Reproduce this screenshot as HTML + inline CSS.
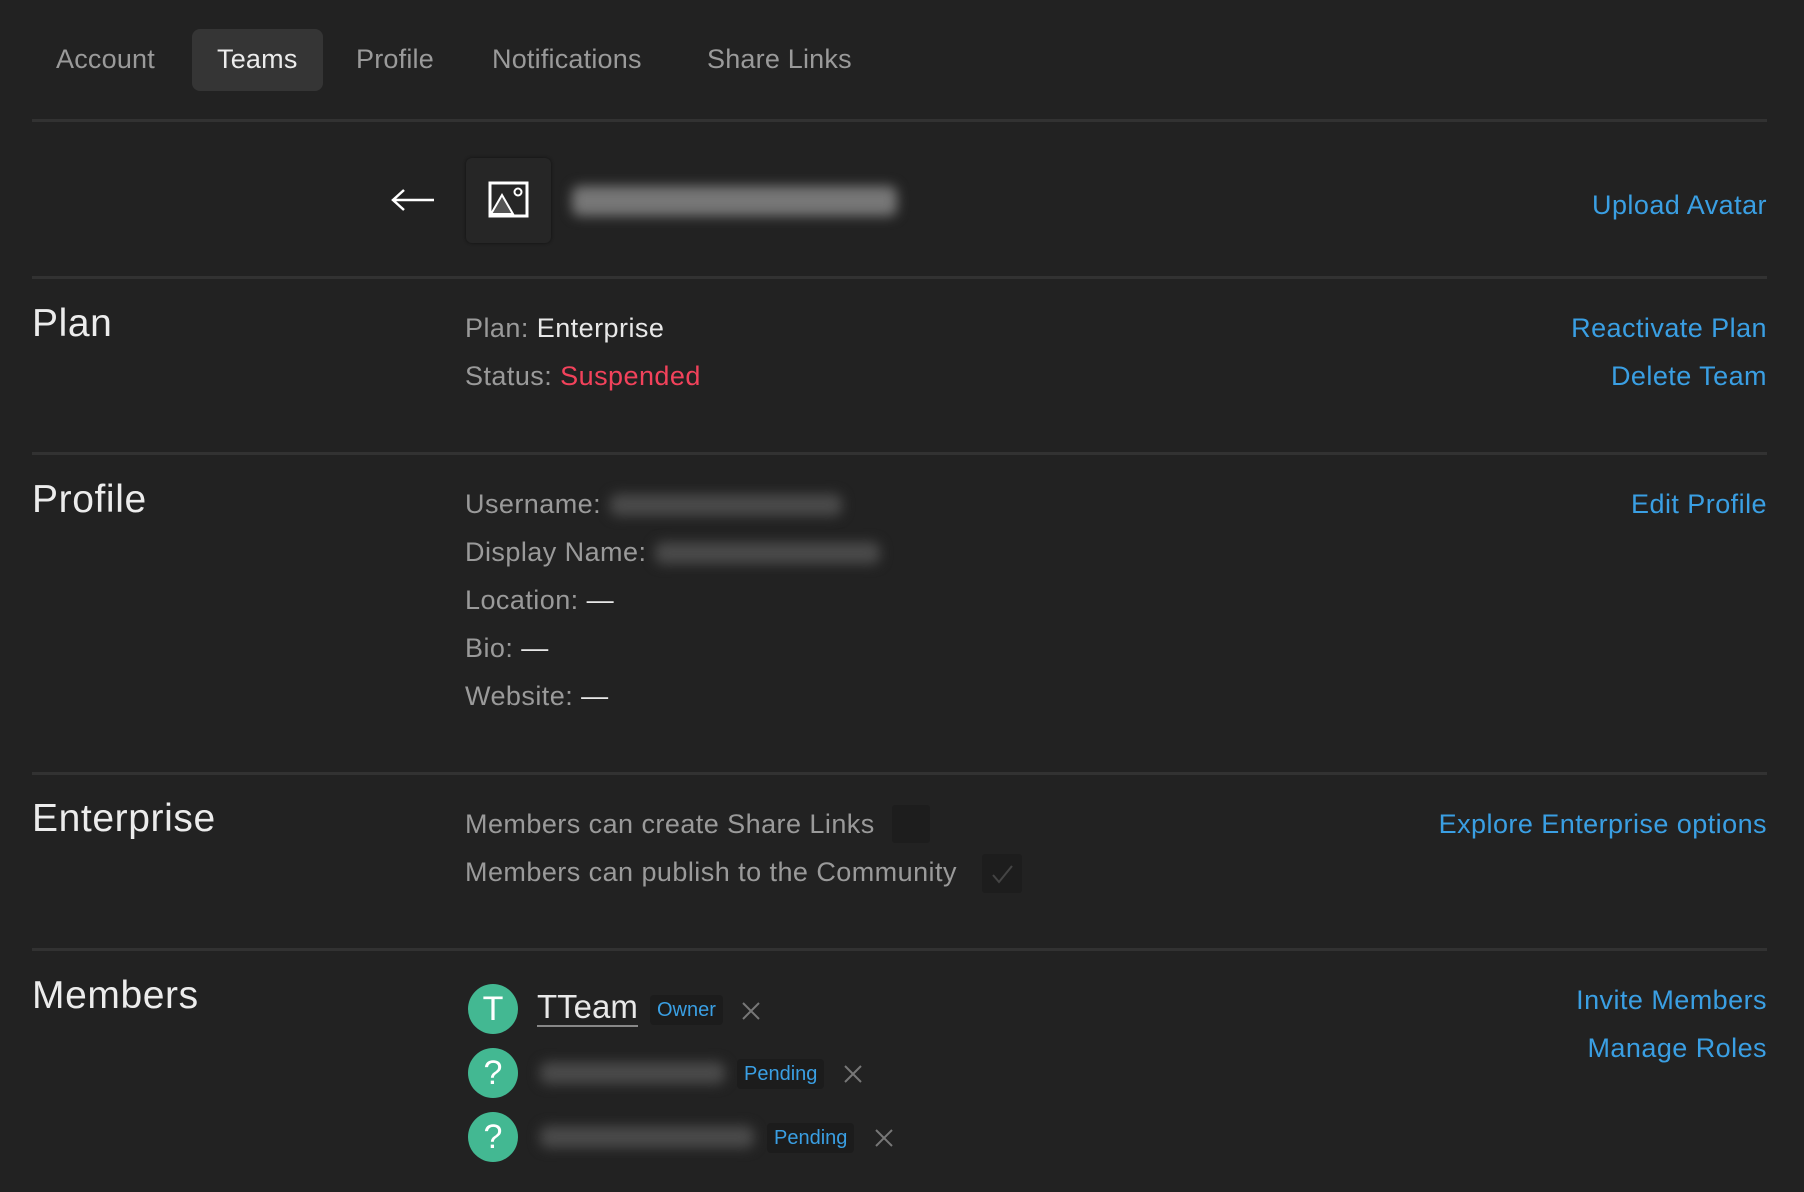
<!DOCTYPE html>
<html><head><meta charset="utf-8"><style>
*{margin:0;padding:0;box-sizing:border-box}
body{width:1804px;height:1192px;background:#222222;font-family:"Liberation Sans",sans-serif;position:relative;overflow:hidden;color:#9a9a9a}
.a{position:absolute;white-space:nowrap}
.t{font-size:27px;line-height:32px;transform:translateY(-16px);letter-spacing:0.45px}
.tab{font-size:27px;color:#9a9a9a;top:44px;letter-spacing:0.2px}
.line{position:absolute;left:32px;width:1735px;height:3px;background:#323232}
.h{font-size:39px;color:#ececec;line-height:44px;transform:translateY(-22px);left:32px;letter-spacing:0.6px}
.r{right:37px;color:#3a9fe3}
.w{color:#e8e8e8}
.blur{position:absolute;height:22px;background:#4a4a4a;filter:blur(6px);border-radius:8px}
.av{position:absolute;left:468px;width:50px;height:50px;border-radius:50%;background:#43b892;color:#fff;font-size:34px;text-align:center;line-height:50px;transform:translateY(-25px)}
.badge{position:absolute;height:30px;line-height:30px;background:#1c1c1c;border-radius:4px;color:#3a9fe3;font-size:20px;padding:0 7px;transform:translateY(-15px)}
.x{position:absolute;transform:translate(-11px,-11px)}
</style></head><body>
<div class="a" style="left:192px;top:29px;width:131px;height:62px;background:#353535;border-radius:8px"></div>
<div class="a tab" style="left:56px">Account</div>
<div class="a tab" style="left:217px;color:#ececec">Teams</div>
<div class="a tab" style="left:356px">Profile</div>
<div class="a tab" style="left:492px">Notifications</div>
<div class="a tab" style="left:707px">Share Links</div>
<div class="line" style="top:119px"></div>

<svg class="a" style="left:390px;top:187px" width="46" height="26" viewBox="0 0 46 26"><path d="M44 13H4M14 3L3 13l11 10" stroke="#fff" stroke-width="2.5" fill="none"/></svg>
<div class="a" style="left:466px;top:158px;width:85px;height:85px;background:#262626;border-radius:6px;box-shadow:0 0 3px #111"></div>
<svg class="a" style="left:488px;top:181px" width="41" height="37" viewBox="0 0 41 37"><rect x="2" y="2" width="37" height="33" fill="none" stroke="#fff" stroke-width="3"/><path d="M3 33L14 14l11 19z" fill="#555" stroke="#fff" stroke-width="2"/><circle cx="30" cy="11" r="3.5" fill="none" stroke="#fff" stroke-width="2"/></svg>
<div class="blur" style="left:572px;top:186px;width:325px;height:30px;background:#777"></div>
<div class="a t r" style="top:205px">Upload Avatar</div>
<div class="line" style="top:276px"></div>

<div class="a h" style="top:324px">Plan</div>
<div class="a t" style="left:465px;top:328px">Plan: <span class="w">Enterprise</span></div>
<div class="a t" style="left:465px;top:376px">Status: <span style="color:#f2425b">Suspended</span></div>
<div class="a t r" style="top:328px">Reactivate Plan</div>
<div class="a t r" style="top:376px">Delete Team</div>
<div class="line" style="top:452px"></div>

<div class="a h" style="top:500px">Profile</div>
<div class="a t" style="left:465px;top:504px">Username:</div><div class="blur" style="left:610px;top:494px;width:232px"></div>
<div class="a t" style="left:465px;top:552px">Display Name:</div><div class="blur" style="left:655px;top:542px;width:225px"></div>
<div class="a t" style="left:465px;top:600px">Location: <span class="w">—</span></div>
<div class="a t" style="left:465px;top:648px">Bio: <span class="w">—</span></div>
<div class="a t" style="left:465px;top:696px">Website: <span class="w">—</span></div>
<div class="a t r" style="top:504px">Edit Profile</div>
<div class="line" style="top:772px"></div>

<div class="a h" style="top:819px">Enterprise</div>
<div class="a t" style="left:465px;top:824px">Members can create Share Links</div>
<div class="a" style="left:892px;top:805px;width:38px;height:38px;background:#1d1d1d;border-radius:3px"></div>
<div class="a t" style="left:465px;top:872px">Members can publish to the Community</div>
<div class="a" style="left:982px;top:854px;width:40px;height:39px;background:#1d1d1d;border-radius:3px"></div>
<svg class="a" style="left:990px;top:862px" width="24" height="24"><path d="M3 13l6 7L22 4" stroke="#444" stroke-width="2" fill="none"/></svg>
<div class="a t r" style="top:824px">Explore Enterprise options</div>
<div class="line" style="top:948px"></div>

<div class="a h" style="top:996px">Members</div>
<div class="av" style="top:1009px">T</div>
<div class="a" style="left:537px;top:989px;font-size:33px;color:#e8e8e8;border-bottom:2px solid #888;line-height:36px">TTeam</div>
<div class="badge" style="left:650px;top:1010px">Owner</div>
<svg class="x" style="left:751px;top:1011px" width="22" height="22"><path d="M3 3l16 16M19 3L3 19" stroke="#777" stroke-width="2"/></svg>
<div class="av" style="top:1073px">?</div>
<div class="blur" style="left:540px;top:1062px;width:185px"></div>
<div class="badge" style="left:737px;top:1074px">Pending</div>
<svg class="x" style="left:853px;top:1074px" width="22" height="22"><path d="M3 3l16 16M19 3L3 19" stroke="#777" stroke-width="2"/></svg>
<div class="av" style="top:1137px">?</div>
<div class="blur" style="left:540px;top:1126px;width:214px"></div>
<div class="badge" style="left:767px;top:1138px">Pending</div>
<svg class="x" style="left:884px;top:1138px" width="22" height="22"><path d="M3 3l16 16M19 3L3 19" stroke="#777" stroke-width="2"/></svg>
<div class="a t r" style="top:1000px">Invite Members</div>
<div class="a t r" style="top:1048px">Manage Roles</div>
</body></html>
